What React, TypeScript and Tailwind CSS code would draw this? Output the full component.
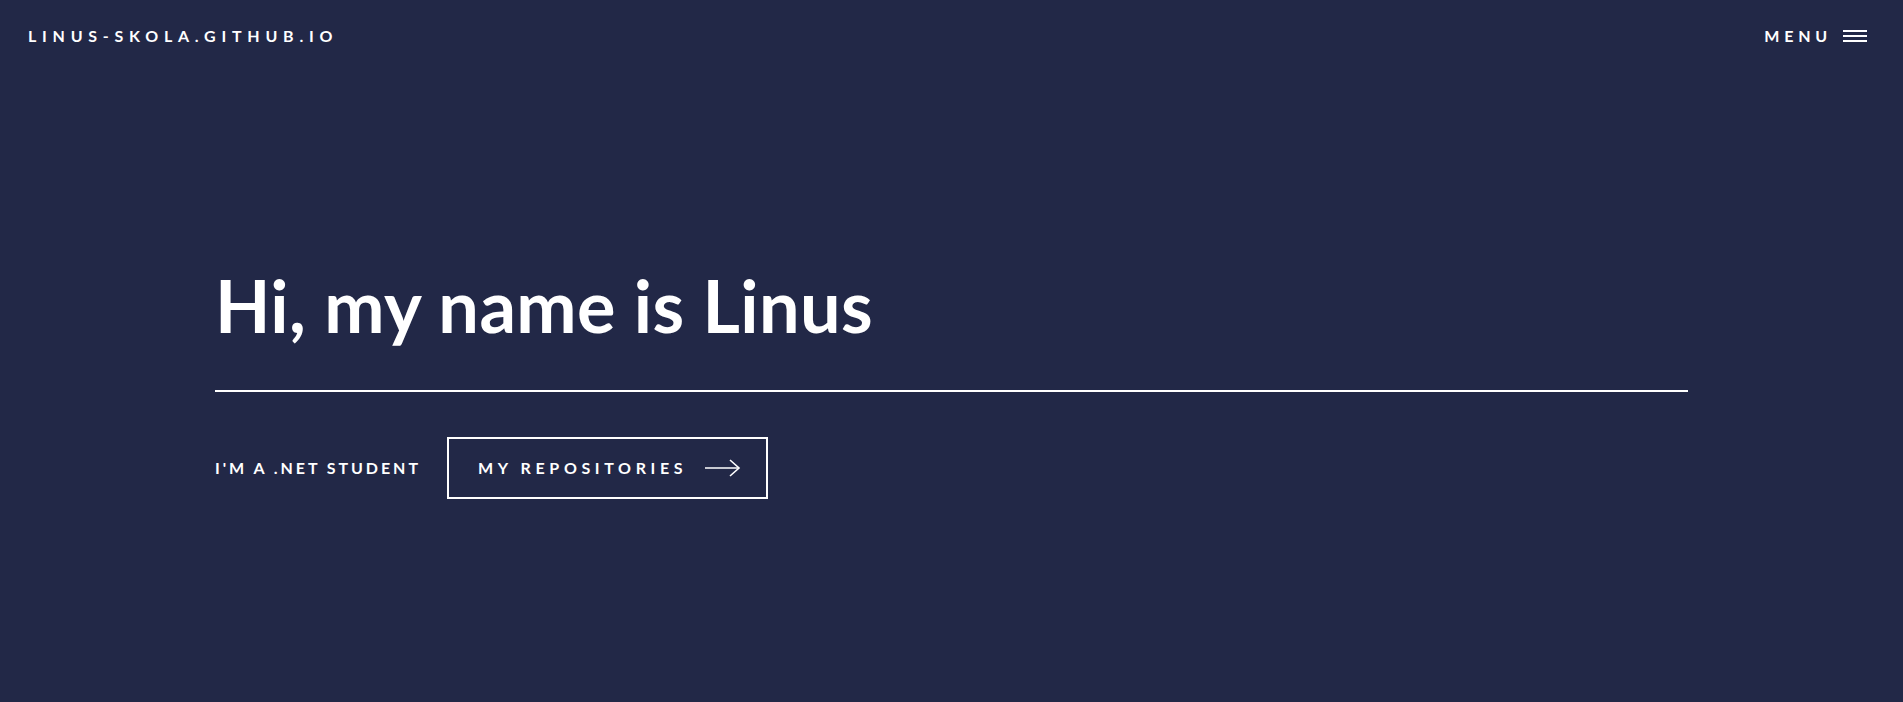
export default function App() {
  return (
    <div className="min-h-[702px] bg-[#222847] text-white font-['Lato',sans-serif]">
      <header className="flex h-[72px] items-center justify-between pl-[28px] pr-[36px]">
        <a className="text-[16px] font-bold tracking-[0.36em]">LINUS-SKOLA.GITHUB.IO</a>
        <button className="flex items-center gap-[11px]">
          <span className="text-[16px] font-bold tracking-[0.3em]">MENU</span>
          <svg width="24" height="12" viewBox="0 0 24 12" fill="white">
            <rect x="0" y="0" width="24" height="2" />
            <rect x="0" y="5" width="24" height="2" />
            <rect x="0" y="10" width="24" height="2" />
          </svg>
        </button>
      </header>

      <main className="mx-auto w-[1473px] pt-[197px]">
        <h1 className="text-[72px] font-bold leading-none tracking-[0.4px]">Hi, my name is Linus</h1>
        <div className="mt-[49px] h-[2px] bg-white" />
        <div className="mt-[45px] flex items-center gap-[26px]">
          <p className="text-[16px] font-bold tracking-[0.184em]">I'M A .NET STUDENT</p>
          <a className="flex h-[62px] items-center gap-[18px] border-2 border-white pl-[29px] pr-[25px]">
            <span className="text-[16px] font-bold tracking-[0.29em]">MY REPOSITORIES</span>
            <svg width="36" height="18" viewBox="0 0 36 18" fill="none" stroke="white" strokeWidth="1.6">
              <path d="M0 9h34" />
              <path d="M25 1l9 8-9 8" />
            </svg>
          </a>
        </div>
      </main>
    </div>
  );
}
